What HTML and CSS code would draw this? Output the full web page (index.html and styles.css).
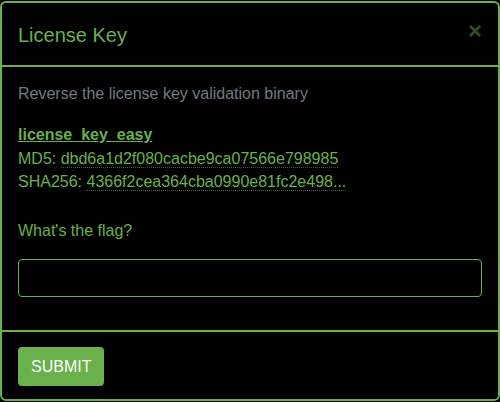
FILE: index.html
```html
<!DOCTYPE html>
<html>
<head>
<meta charset="utf-8">
<link rel="stylesheet" href="styles.css">
</head>
<body>
<div class="modal">
  <div class="modal-header">
    <h4 class="modal-title">License Key</h4>
    <span class="close">&times;</span>
  </div>
  <div class="modal-body">
    <p class="desc">Reverse the license key validation binary</p>
    <div class="files">
      <a class="file-link">license_key_easy</a>
      <div>MD5: <abbr class="hash">dbd6a1d2f080cacbe9ca07566e798985</abbr></div>
      <div>SHA256: <abbr class="hash">4366f2cea364cba0990e81fc2e498...</abbr></div>
    </div>
    <label class="flag-label">What's the flag?</label>
    <input class="flag-input" type="text">
  </div>
  <div class="modal-footer">
    <button class="btn">SUBMIT</button>
  </div>
</div>
</body>
</html>
```
FILE: styles.css
```css
html, body {
  margin: 0;
  padding: 0;
  background: #000;
}
body {
  font-family: "Liberation Sans", Arial, sans-serif;
  font-size: 16px;
  line-height: 1.5;
  color: #6ab04c;
  padding-top: 1px;
}
.modal {
  box-sizing: border-box;
  width: 500px;
  height: 400px;
  border: 2px solid #6ab04c;
  border-radius: 6px;
  background: #000;
  display: flex;
  flex-direction: column;
}
.modal-header {
  display: flex;
  justify-content: space-between;
  align-items: center;
  height: 62px;
  padding: 0 16px;
  border-bottom: 2px solid #6ab04c;
  box-sizing: content-box;
}
.modal-title {
  margin: 0;
  font-size: 20px;
  font-weight: normal;
  line-height: 30px;
  color: #6ab04c;
  padding-top: 1px;
}
.close {
  font-size: 24px;
  font-weight: bold;
  line-height: 1;
  color: #6ab04c;
  opacity: 0.45;
  margin-right: 0;
  margin-top: -6px;
}
.modal-body {
  flex: 1;
  padding: 15px 16px 0;
  display: flex;
  flex-direction: column;
}
.desc {
  margin: 0 0 17px;
  color: #6f7a85;
}
.files {
  line-height: 23.5px;
}
.file-link {
  font-weight: bold;
  text-decoration: underline;
  color: #6ab04c;
}
.hash {
  text-decoration: none;
  border-bottom: 1px dotted #3d5e2e;
}
.flag-label {
  display: block;
  margin-top: 25px;
}
.flag-input {
  box-sizing: border-box;
  margin-top: 16px;
  width: 464px;
  height: 38px;
  background: #000;
  border: 1px solid #6ab04c;
  border-radius: 4px;
  color: #6ab04c;
  font: inherit;
  padding: 6px 12px;
  outline: none;
}
.modal-footer {
  border-top: 2px solid #6ab04c;
  height: 69px;
  box-sizing: border-box;
  padding: 15px 16px;
}
.btn {
  background: #6ab04c;
  color: #fff;
  border: none;
  border-radius: 4px;
  font-family: "Liberation Sans", Arial, sans-serif;
  font-size: 16px;
  line-height: 19px;
  padding: 10px 13px;
  height: 39px;
}
```
